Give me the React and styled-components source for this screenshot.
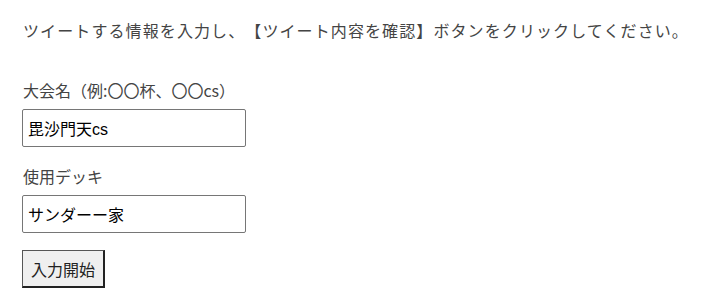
import styled, { createGlobalStyle } from 'styled-components'

const GlobalStyle = createGlobalStyle`
  body {
    margin: 0;
    background: #fff;
    font-family: "Noto Sans CJK JP", "Liberation Sans", sans-serif;
    text-spacing-trim: space-all;
  }
`

const Page = styled.div`
  padding: 20px 0 20px 23px;
  color: #444;
  font-size: 16px;
`

const Intro = styled.p`
  margin: 0 0 39px;
  line-height: 20px;
  letter-spacing: 1.1px;
  white-space: nowrap;
`

const Field = styled.div`
  display: flex;
  flex-direction: column;
  gap: 8px;
  margin-bottom: 18px;

  &:last-of-type {
    margin-bottom: 17px;
  }
`

const Label = styled.label`
  line-height: 22px;
`

const TextInput = styled.input`
  box-sizing: border-box;
  width: 224px;
  height: 38px;
  margin-left: -1px;
  padding: 0 5px;
  border: 1px solid #767676;
  border-radius: 2px;
  font: inherit;
  font-family: "Liberation Sans", "Noto Sans CJK JP", sans-serif;
  color: #000;
`

const StartButton = styled.button`
  box-sizing: border-box;
  height: 38px;
  margin-left: -1px;
  padding: 0 8px;
  background: #efefef;
  border-style: solid;
  border-width: 1px 2px 2px 1px;
  border-color: #555 #222 #222 #555;
  font: inherit;
  color: #222;
`

function App() {
  return (
    <Page>
      <GlobalStyle />
      <Intro>ツイートする情報を入力し、【ツイート内容を確認】ボタンをクリックしてください。</Intro>
      <Field>
        <Label>大会名（例:〇〇杯、〇〇cs）</Label>
        <TextInput defaultValue="毘沙門天cs" />
      </Field>
      <Field>
        <Label>使用デッキ</Label>
        <TextInput defaultValue="サンダーー家" />
      </Field>
      <StartButton>入力開始</StartButton>
    </Page>
  )
}

export default App
